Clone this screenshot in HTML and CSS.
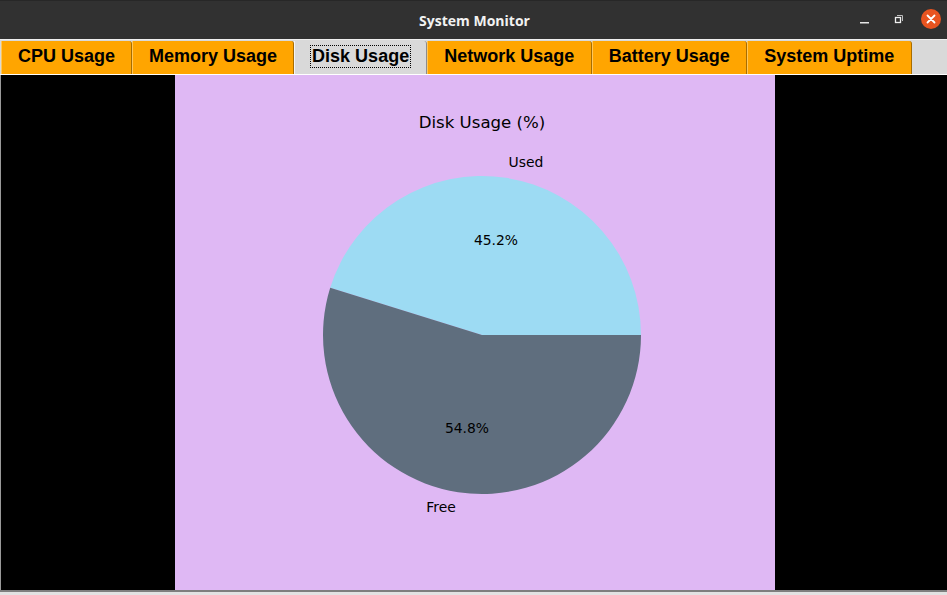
FILE: index.html
```html
<!DOCTYPE html>
<html lang="en">
<head>
    <meta charset="UTF-8">
    <meta name="viewport" content="width=device-width, initial-scale=1.0">
    <title>System Monitor</title>
    <link rel="stylesheet" href="styles.css">
</head>
<body>

    <div class="window">
        <div class="titlebar">
            <span class="title">System Monitor</span>
            <div class="controls">
                <svg class="ctl min" width="14" height="14" viewBox="0 0 14 14">
                    <rect x="2" y="10" width="9" height="1.5" fill="#e6e6e6"/>
                </svg>
                <svg class="ctl max" width="14" height="14" viewBox="0 0 14 14">
                    <path d="M5 3.5 H10.5 V9" fill="none" stroke="#bdbdbd" stroke-width="1"/>
                    <rect x="3.5" y="5.5" width="5" height="5" fill="none" stroke="#f0f0f0" stroke-width="1.3"/>
                </svg>
                <div class="close">
                    <svg width="20" height="20" viewBox="0 0 20 20">
                        <path d="M6.5 6.5 L13.5 13.5 M13.5 6.5 L6.5 13.5" stroke="#fff" stroke-width="1.8" stroke-linecap="round"/>
                    </svg>
                </div>
            </div>
        </div>

        <div class="tabs">
            <div class="tab">CPU Usage</div>
            <div class="tab">Memory Usage</div>
            <div class="tab active"><span class="focus">Disk Usage</span></div>
            <div class="tab">Network Usage</div>
            <div class="tab">Battery Usage</div>
            <div class="tab">System Uptime</div>
        </div>

        <div class="content">
            <div class="figure">
                <svg width="600" height="515" viewBox="0 0 600 515">
                    <text class="chart-title" x="307" y="47">Disk Usage (%)</text>
                    <!-- used: 45.2% from 0deg counter-clockwise -->
                    <path d="M307 260 L466 260 A159 159 0 0 0 155.2 212.7 Z" fill="#9ddbf3"/>
                    <path d="M307 260 L155.2 212.7 A159 159 0 1 0 466 260 Z" fill="#5f6e7e"/>
                    <text class="label" x="351" y="87">Used</text>
                    <text class="label" x="321" y="165">45.2%</text>
                    <text class="label" x="292" y="353">54.8%</text>
                    <text class="label" x="266" y="432">Free</text>
                </svg>
            </div>
        </div>

        <div class="bottom"></div>
    </div>

</body>
</html>
```

FILE: styles.css
```css
body {
    margin: 0;
    background-color: #d9d9d9;
    overflow: hidden;
}
.window {
    width: 947px;
    height: 595px;
    display: flex;
    flex-direction: column;
}
.titlebar {
    height: 39px;
    background: #313131;
    border-top: 1px solid #272727;
    box-sizing: border-box;
    display: flex;
    align-items: center;
    justify-content: center;
    position: relative;
}
.title {
    font-family: "Open Sans", "DejaVu Sans", sans-serif;
    font-weight: 700;
    font-size: 14px;
    color: #f2f2f2;
    margin-left: 2px;
}
.controls {
    position: absolute;
    right: 6px;
    top: 8px;
    display: flex;
    align-items: center;
}
.min {
    margin-right: 20px;
}
.max {
    margin-right: 15px;
}
.close {
    width: 20px;
    height: 20px;
    border-radius: 50%;
    background: #e95420;
}
.close svg {
    display: block;
}
.tabs {
    height: 36px;
    box-sizing: border-box;
    border-top: 1px solid #efefef;
    border-bottom: 1px solid #ffffff;
    padding: 1px 0 0 1px;
    display: flex;
    background: #d9d9d9;
}
.tab {
    font-family: "Liberation Sans", Arial, sans-serif;
    font-weight: bold;
    font-size: 18px;
    color: #000;
    background: #ffa500;
    padding: 0 16px 3px;
    display: flex;
    align-items: center;
    border-left: 1px solid #ffc75a;
    border-right: 1px solid #a86d00;
    border-top-right-radius: 3px;
}
.tab:nth-child(n+4) {
    padding-right: 16.5px;
}
.tab.active {
    background: #d9d9d9;
    border-left: 1px solid #f4f4f4;
    border-right: 1px solid #8c8c8c;
}
.focus {
    outline: 1px dotted #000;
    outline-offset: 0;
    padding: 0 1px;
    line-height: 21px;
}
.content {
    flex: 1;
    background: #000;
    border-left: 1px solid #9a9a9a;
    display: flex;
    justify-content: center;
    padding-left: 2px;
}
.figure {
    width: 600px;
    background: #dfb8f4;
}
.figure svg {
    display: block;
}
.chart-title {
    font-family: "DejaVu Sans", sans-serif;
    font-size: 16.6px;
    text-anchor: middle;
    dominant-baseline: central;
    fill: #000;
}
.label {
    font-family: "DejaVu Sans", sans-serif;
    font-size: 13.9px;
    text-anchor: middle;
    dominant-baseline: central;
    fill: #000;
}
.bottom {
    height: 5px;
    box-sizing: border-box;
    border-top: 2px solid #7e7e7e;
    background: #e2e2e2;
}
```
